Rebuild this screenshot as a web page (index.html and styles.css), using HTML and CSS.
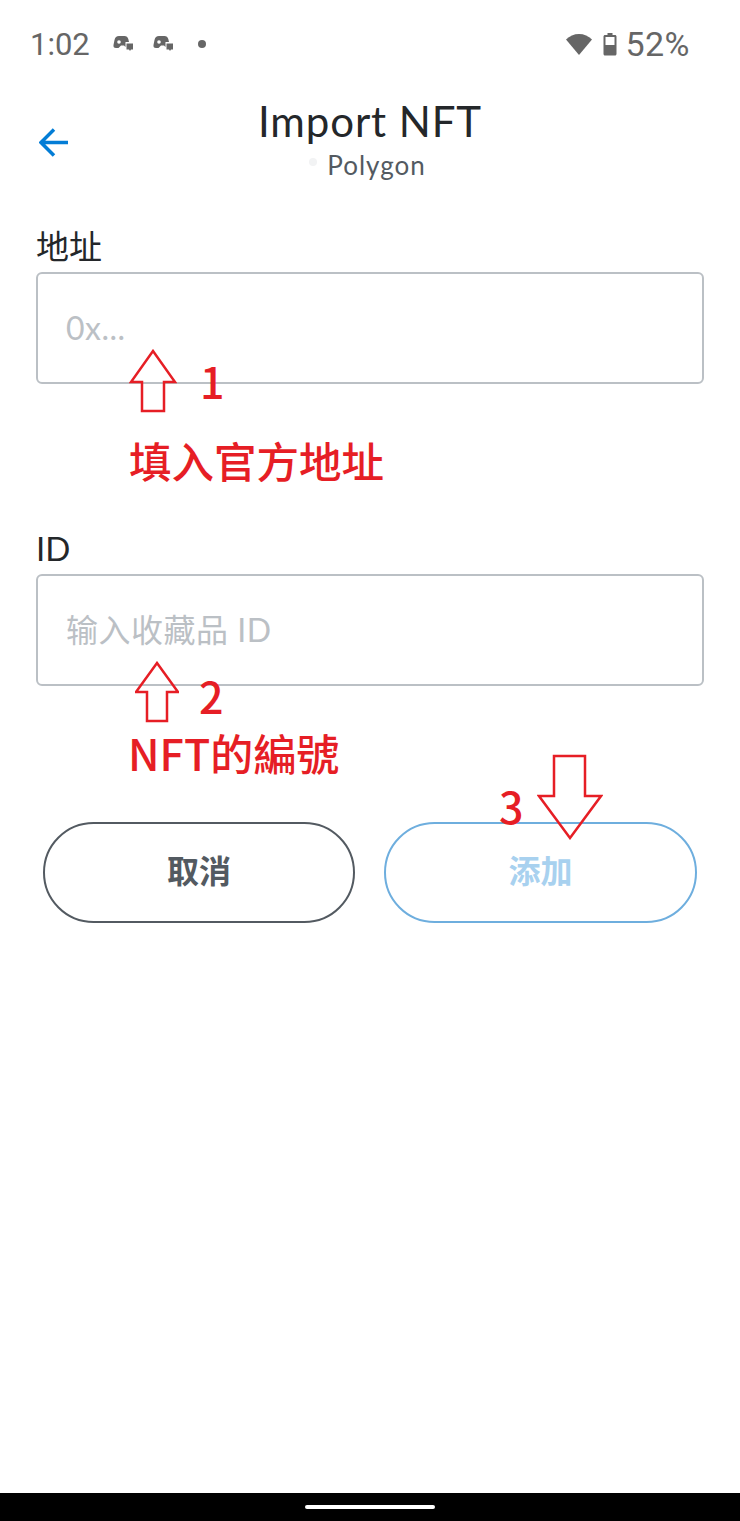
FILE: index.html
```html
<!DOCTYPE html>
<html lang="zh-CN">
<head>
  <meta charset="UTF-8">
  <title>Import NFT</title>
  <meta name="viewport" content="width=device-width, initial-scale=1.0">
  <link rel="stylesheet" href="styles.css">
</head>
<body>
  <div class="tela">
    <div class="status">
      <div class="status-esq">
        <span class="hora">1:02</span>
        <svg class="notif" viewBox="0 0 20 18"><path d="M6 1h5.500c2 0 3.200 1 3.800 3l.7 3h-3.500v5l-1.500-1.500H8L5.500 13H3c-2 0-2.800-1.200-2.500-3l1-5C2 2.500 3.500 1 6 1z" fill="#666"/><circle cx="6" cy="7" r="1.800" fill="#fff"/><path d="M13.500 8.500H20v6h-2l-1 1.500-1-1.500h-2.500z" fill="#666"/></svg>
        <svg class="notif" viewBox="0 0 20 18"><path d="M6 1h5.500c2 0 3.200 1 3.800 3l.7 3h-3.500v5l-1.500-1.500H8L5.500 13H3c-2 0-2.800-1.200-2.500-3l1-5C2 2.500 3.500 1 6 1z" fill="#666"/><circle cx="6" cy="7" r="1.800" fill="#fff"/><path d="M13.500 8.500H20v6h-2l-1 1.500-1-1.500h-2.500z" fill="#666"/></svg>
        <span class="ponto"></span>
      </div>
      <div class="status-dir">
        <svg class="wifi" viewBox="0 0 28 24"><path d="M14 23 1 7.500C4.500 4 9 2 14 2s9.500 2 13 5.500z" fill="#666"/></svg>
        <svg class="bateria" viewBox="0 0 14 24"><path d="M4.500 1h5v2H12c.8 0 1.500.7 1.500 1.500V22c0 .8-.7 1.500-1.500 1.500H2c-.8 0-1.500-.7-1.500-1.500V4.500C.5 3.700 1.200 3 2 3h2.500z" fill="#666"/><rect x="2.500" y="5" width="9" height="8" fill="#fff"/></svg>
        <span class="pct">52%</span>
      </div>
    </div>

    <div class="topo">
      <svg class="voltar" viewBox="0 0 30 30"><path d="M29 14.500H3M15 1.500 2 14.500l13 13" fill="none" stroke="#037dd6" stroke-width="3.500"/></svg>
      <div class="titulo">Import NFT</div>
      <div class="rede"><span class="rede-ponto"></span>Polygon</div>
    </div>

    <div class="form">
      <div class="campo campo-end">
        <label>地址</label>
        <div class="entrada">0x...</div>
      </div>
      <div class="campo">
        <label>ID</label>
        <div class="entrada">输入收藏品 ID</div>
      </div>
      <div class="botoes">
        <div class="btn btn-cancelar">取消</div>
        <div class="btn btn-add">添加</div>
      </div>
    </div>

    <div class="barra-nav"><span class="alca"></span></div>

    <!-- anotacoes por cima da tela -->
    <svg class="seta seta-1" viewBox="0 0 48 64"><path d="M24 2 46 33H35V62H13V33H2z" fill="none" stroke="#e61e25" stroke-width="2.500"/></svg>
    <span class="nota num-1">1</span>
    <span class="nota txt-1">填入官方地址</span>
    <svg class="seta seta-2" viewBox="0 0 44 62"><path d="M22 2 43 31H32V60H12V31H1z" fill="none" stroke="#e61e25" stroke-width="2.500"/></svg>
    <span class="nota num-2">2</span>
    <span class="nota txt-2">NFT的編號</span>
    <span class="nota num-3">3</span>
    <svg class="seta seta-3" viewBox="0 0 66 86"><path d="M17 2H48V42H64L33 84 2 42H17z" fill="none" stroke="#e61e25" stroke-width="2.500"/></svg>
  </div>
</body>
</html>
```

FILE: styles.css
```css
body {
  margin: 0;
  background: #fff;
  font-family: "Lato", "Noto Sans CJK SC", sans-serif;
}
.tela {
  position: relative;
  width: 740px;
  height: 1521px;
  overflow: hidden;
  display: flex;
  flex-direction: column;
}
.status {
  height: 88px;
  box-sizing: border-box;
  padding: 0 50px 0 30px;
  display: flex;
  justify-content: space-between;
  align-items: center;
  color: #666;
  font-family: "Roboto", sans-serif;
  font-size: 31px;
}
.status-esq, .status-dir {
  display: flex;
  align-items: center;
}
.hora {
  width: 83px;
}
.notif {
  width: 20px;
  height: 18px;
  margin-right: 20px;
}
.ponto {
  width: 8px;
  height: 8px;
  border-radius: 50%;
  background: #666;
  margin-left: 5px;
}
.wifi {
  width: 28px;
  height: 24px;
}
.bateria {
  width: 14px;
  height: 24px;
  margin-left: 10px;
}
.pct {
  margin-left: 8px;
  font-size: 34px;
  letter-spacing: 0.5px;
}
.topo {
  position: relative;
  height: 110px;
  text-align: center;
}
.voltar {
  position: absolute;
  left: 39px;
  top: 40px;
  width: 30px;
  height: 30px;
}
.titulo {
  font-size: 42px;
  line-height: 50px;
  margin-top: 8px;
  letter-spacing: 0.9px;
  color: #24272a;
}
.rede {
  font-size: 26px;
  line-height: 32px;
  margin-top: 3px;
  padding-right: 5px;
  color: #535a61;
  letter-spacing: 1px;
  display: flex;
  justify-content: center;
  align-items: center;
}
.rede-ponto {
  width: 8px;
  height: 8px;
  border-radius: 50%;
  background: #f2f3f4;
  margin: 0 10px 6px 0;
}
.form {
  padding: 29px 36px 0;
}
.campo label {
  display: block;
  font-size: 33px;
  line-height: 38px;
  color: #24272a;
  margin-bottom: 7px;
}
.campo-end {
  margin-bottom: 145px;
}
.entrada {
  height: 108px;
  border: 2px solid #bbc0c5;
  border-radius: 6px;
  padding-left: 28px;
  line-height: 107px;
  font-size: 32px;
  letter-spacing: 0.5px;
  color: #bbc0c5;
}
.botoes {
  display: flex;
  justify-content: space-between;
  padding: 0 7px;
  margin-top: 136px;
}
.btn {
  width: 312px;
  height: 101px;
  box-sizing: border-box;
  border-radius: 51px;
  border: 2px solid #535a61;
  color: #535a61;
  font-size: 32px;
  font-weight: 700;
  line-height: 94px;
  text-align: center;
}
.btn-add {
  width: 313px;
  border-color: #6eaede;
  color: #a8d1ef;
}
.barra-nav {
  margin-top: auto;
  height: 28px;
  background: #000;
  display: flex;
  justify-content: center;
  align-items: center;
}
.alca {
  width: 130px;
  height: 4px;
  border-radius: 2px;
  background: #fff;
}
.seta {
  position: absolute;
}
.nota {
  position: absolute;
  color: #e61e25;
  font-weight: 500;
  font-family: "Noto Sans CJK TC", sans-serif;
}
.seta-1 { left: 129px; top: 349px; width: 48px; height: 64px; }
.seta-2 { left: 135px; top: 661px; width: 44px; height: 62px; }
.seta-3 { left: 537px; top: 754px; width: 66px; height: 86px; }
.num-1 { left: 200px; top: 350px; font-size: 43px; line-height: 60px; }
.num-2 { left: 199px; top: 665px; font-size: 43px; line-height: 60px; }
.num-3 { left: 499px; top: 775px; font-size: 43px; line-height: 60px; }
.txt-1 { left: 129px; top: 432px; font-size: 42.500px; line-height: 56px; }
.txt-2 { left: 128px; top: 724px; font-size: 43px; line-height: 56px; }
```
